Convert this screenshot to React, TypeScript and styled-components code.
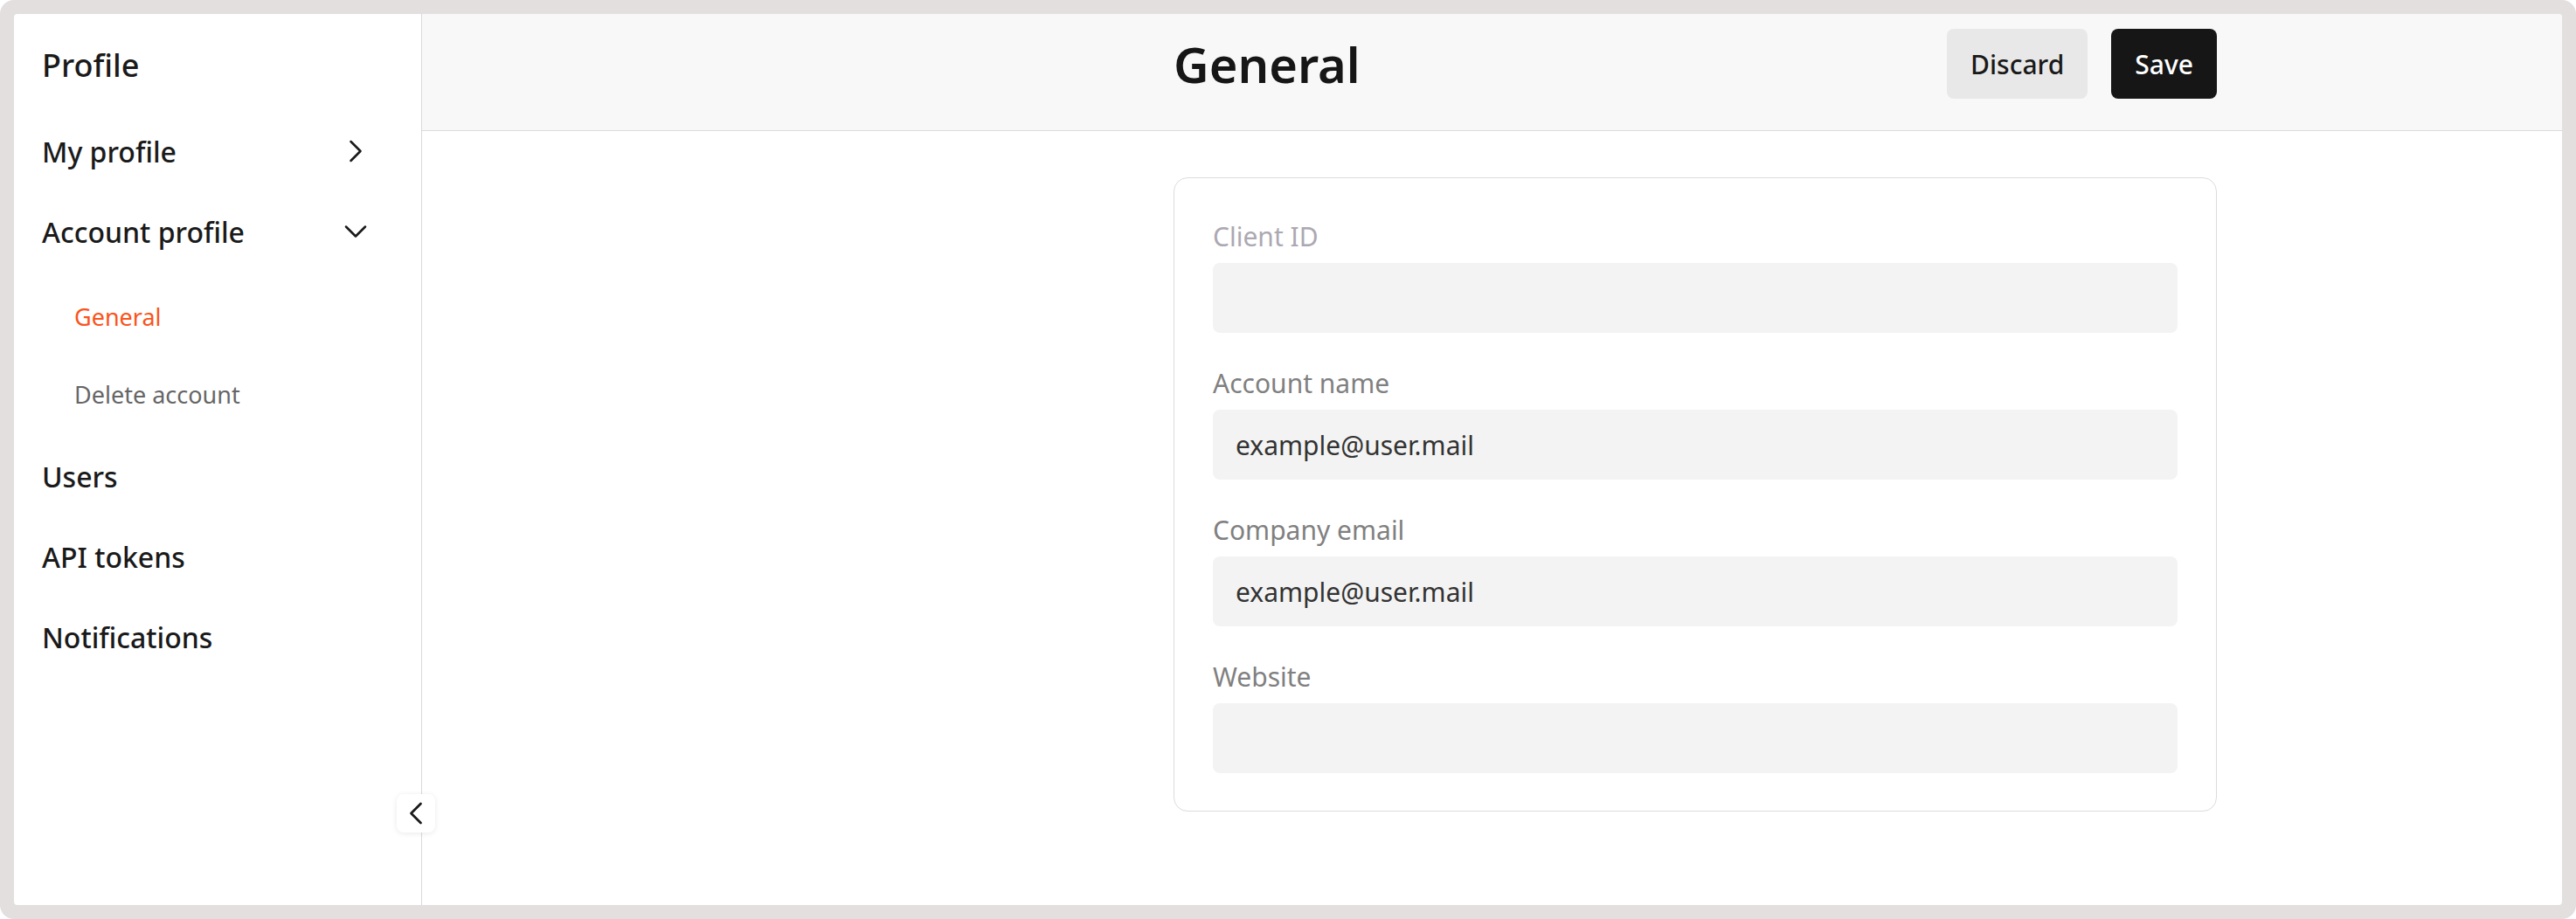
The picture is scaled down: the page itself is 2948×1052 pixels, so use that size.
import React from "react";
import styled, { createGlobalStyle } from "styled-components";
import { ChevronRight, ChevronDown, ChevronLeft } from "lucide-react";

const GlobalStyle = createGlobalStyle`
  html, body { margin: 0; padding: 0; background: #ffffff; }
  body { font-family: "Noto Sans", "Open Sans", sans-serif; color: #1a1a1a; }
  * { box-sizing: border-box; }
`;

const Frame = styled.div`
  width: 2948px;
  height: 1052px;
  background: #e3dfdf;
  border-radius: 16px;
  padding: 16px;
`;

const Shell = styled.div`
  display: flex;
  height: 100%;
  background: #ffffff;
  border-radius: 4px;
  overflow: hidden;
`;

const Sidebar = styled.aside`
  position: relative;
  flex: 0 0 467px;
  border-right: 1px solid #dad8de;
  padding: 35px 0 0 32px;
  display: flex;
  flex-direction: column;
`;

const SidebarTitle = styled.h2`
  margin: 0 0 28px;
  font-size: 36px;
  line-height: 48px;
  font-weight: 460;
  color: #1a1a1a;
`;

const NavList = styled.nav`
  display: flex;
  flex-direction: column;
`;

const NavRow = styled.div`
  height: 92px;
  display: flex;
  align-items: center;
  justify-content: space-between;
  padding-right: 53px;
  font-size: 32px;
  font-weight: 460;
  color: #1a1a1a;
  cursor: pointer;
`;

const NavIcon = styled.span`
  display: flex;
  width: 44px;
  height: 44px;
  align-items: center;
  justify-content: center;
  color: #1a1a1a;
`;

const SubList = styled.div`
  display: flex;
  flex-direction: column;
  padding: 7px 0 3px 37px;
`;

const SubRow = styled.div<{ $active?: boolean }>`
  height: 89px;
  display: flex;
  align-items: center;
  font-size: 27px;
  color: ${(p) => (p.$active ? "#fa541c" : "#666666")};
  cursor: pointer;
`;

const CollapseButton = styled.button`
  position: absolute;
  right: -16px;
  top: 893px;
  width: 44px;
  height: 44px;
  border: none;
  border-radius: 8px;
  background: #ffffff;
  box-shadow: 0 1px 6px rgba(0, 0, 0, 0.09);
  display: flex;
  align-items: center;
  justify-content: center;
  padding: 0;
  color: #1a1a1a;
  cursor: pointer;
`;

const Main = styled.main`
  flex: 1;
  display: flex;
  flex-direction: column;
  min-width: 0;
`;

const Header = styled.header`
  background: #f8f8f8;
  border-bottom: 1px solid #dcdcdc;
  padding: 17px 0 36px 860px;
`;

const Column = styled.div`
  width: 1194px;
  display: flex;
  align-items: center;
  justify-content: space-between;
`;

const Title = styled.h1`
  margin: 0;
  font-size: 56px;
  line-height: 80px;
  font-weight: 600;
  color: #161616;
`;

const Actions = styled.div`
  display: flex;
  gap: 27px;
`;

const Button = styled.button<{ $primary?: boolean }>`
  height: 80px;
  padding: 0 27px;
  border: none;
  border-radius: 8px;
  font-family: "Noto Sans", "Open Sans", sans-serif;
  font-size: 30px;
  font-weight: 460;
  background: ${(p) => (p.$primary ? "#161616" : "#e8e8e8")};
  color: ${(p) => (p.$primary ? "#ffffff" : "#1a1a1a")};
  cursor: pointer;
`;

const Body = styled.div`
  padding: 53px 0 0 860px;
`;

const Card = styled.section`
  width: 1194px;
  border: 1px solid #dcdcdc;
  border-radius: 16px;
  padding: 45px 44px 43px;
  display: flex;
  flex-direction: column;
  gap: 36px;
`;

const Field = styled.div`
  display: flex;
  flex-direction: column;
  gap: 8px;
`;

const Label = styled.label<{ $muted?: boolean }>`
  font-size: 30px;
  line-height: 44px;
  color: ${(p) => (p.$muted ? "#aca8b2" : "#808080")};
`;

const Input = styled.div`
  height: 80px;
  border-radius: 8px;
  background: #f3f3f3;
  display: flex;
  align-items: center;
  padding-left: 26px;
  font-size: 30px;
  color: #333333;
`;

const fields = [
  { label: "Client ID", value: "", muted: true },
  { label: "Account name", value: "example@user.mail" },
  { label: "Company email", value: "example@user.mail" },
  { label: "Website", value: "" },
];

export default function App() {
  return (
    <>
      <GlobalStyle />
      <Frame>
        <Shell>
          <Sidebar>
            <SidebarTitle>Profile</SidebarTitle>
            <NavList>
              <NavRow>
                My profile
                <NavIcon>
                  <ChevronRight size={44} strokeWidth={1.4} />
                </NavIcon>
              </NavRow>
              <NavRow>
                Account profile
                <NavIcon>
                  <ChevronDown size={44} strokeWidth={1.4} />
                </NavIcon>
              </NavRow>
              <SubList>
                <SubRow $active>General</SubRow>
                <SubRow>Delete account</SubRow>
              </SubList>
              <NavRow>Users</NavRow>
              <NavRow>API tokens</NavRow>
              <NavRow>Notifications</NavRow>
            </NavList>
            <CollapseButton aria-label="Collapse sidebar">
              <ChevronLeft size={44} strokeWidth={1.5} />
            </CollapseButton>
          </Sidebar>
          <Main>
            <Header>
              <Column>
                <Title>General</Title>
                <Actions>
                  <Button>Discard</Button>
                  <Button $primary>Save</Button>
                </Actions>
              </Column>
            </Header>
            <Body>
              <Card>
                {fields.map((f) => (
                  <Field key={f.label}>
                    <Label $muted={f.muted}>{f.label}</Label>
                    <Input>{f.value}</Input>
                  </Field>
                ))}
              </Card>
            </Body>
          </Main>
        </Shell>
      </Frame>
    </>
  );
}
